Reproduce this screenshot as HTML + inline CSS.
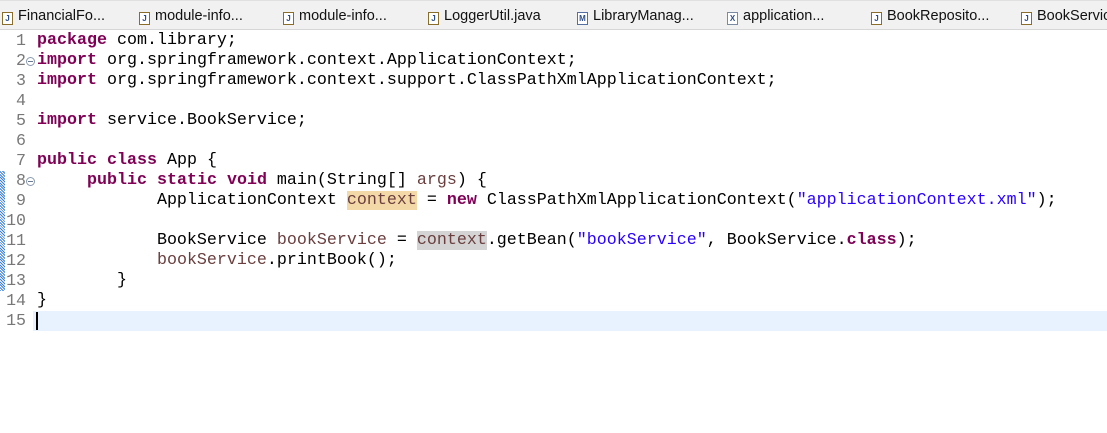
<!DOCTYPE html>
<html><head><style>
body{margin:0;width:1107px;height:433px;background:#fff;overflow:hidden;position:relative;font-family:"Liberation Mono",monospace}
.tabs{position:absolute;left:0;top:0;width:1107px;height:30px;background:#f1f1f1;border-top:1px solid #e0e0e0;border-bottom:1px solid #d6d6d6;box-sizing:border-box}
.tab{position:absolute;top:7px;font:14.5px "Liberation Sans",sans-serif;color:#111;white-space:nowrap}
.ic{display:inline-block;width:9px;height:11px;border:1px solid #8a6d2b;background:#fff;margin-right:5px;vertical-align:-1px;font:bold 8px "Liberation Sans";color:#2b4c8a;text-align:center;line-height:11px}
.ln{position:absolute;left:0;width:26px;text-align:right;font-size:16.6px;color:#787878;line-height:20px}
.code{position:absolute;left:37px;top:31px;margin:0;font-size:16.66px;line-height:20px;color:#000;white-space:pre}
.k{color:#7f0055;font-weight:bold}
.s{color:#2a00ff}
.v{color:#6a3e3e}
.hl{background:#f4d9a8}
.hg{background:#d4d4d4}
.cur{position:absolute;left:33px;top:311px;width:1074px;height:20px;background:#e8f2fe}
.caret{position:absolute;left:36px;top:312px;width:2px;height:18px;background:#000}
.fold{position:absolute;left:26px;width:7px;height:7px;border:1px solid #8a9ab0;border-radius:50%;font-size:0}
.fold:after{content:"";position:absolute;left:1px;top:3px;width:5px;height:1px;background:#6a7a90}
.strip{position:absolute;left:0;top:171px;width:5px;height:120px;background:repeating-linear-gradient(45deg,#3a7fd5 0 1px,#fff 1px 2px)}
</style></head><body>
<div class="tabs">
<div class="tab" style="left:2px"><span class="ic">J</span>FinancialFo...</div>
<div class="tab" style="left:139px"><span class="ic">J</span>module-info...</div>
<div class="tab" style="left:283px"><span class="ic">J</span>module-info...</div>
<div class="tab" style="left:428px"><span class="ic">J</span>LoggerUtil.java</div>
<div class="tab" style="left:577px"><span class="ic" style="border-color:#5570a0">M</span>LibraryManag...</div>
<div class="tab" style="left:727px"><span class="ic" style="border-color:#7a8aa0">X</span>application...</div>
<div class="tab" style="left:871px"><span class="ic">J</span>BookReposito...</div>
<div class="tab" style="left:1021px"><span class="ic">J</span>BookServic</div>
</div>
<div class="cur"></div>
<div class="caret"></div>
<div class="strip"></div>
<div class="ln" style="top:31px">1</div><div class="ln" style="top:51px">2</div><div class="ln" style="top:71px">3</div><div class="ln" style="top:91px">4</div><div class="ln" style="top:111px">5</div><div class="ln" style="top:131px">6</div><div class="ln" style="top:151px">7</div><div class="ln" style="top:171px">8</div><div class="ln" style="top:191px">9</div><div class="ln" style="top:211px">10</div><div class="ln" style="top:231px">11</div><div class="ln" style="top:251px">12</div><div class="ln" style="top:271px">13</div><div class="ln" style="top:291px">14</div><div class="ln" style="top:311px">15</div>
<div class="fold" style="top:57px"></div><div class="fold" style="top:177px"></div>
<pre class="code"><span class="k">package</span> com.library;
<span class="k">import</span> org.springframework.context.ApplicationContext;
<span class="k">import</span> org.springframework.context.support.ClassPathXmlApplicationContext;

<span class="k">import</span> service.BookService;

<span class="k">public</span> <span class="k">class</span> App {
     <span class="k">public</span> <span class="k">static</span> <span class="k">void</span> main(String[] <span class="v">args</span>) {
            ApplicationContext <span class="v hl">context</span> = <span class="k">new</span> ClassPathXmlApplicationContext(<span class="s">"applicationContext.xml"</span>);

            BookService <span class="v">bookService</span> = <span class="v hg">context</span>.getBean(<span class="s">"bookService"</span>, BookService.<span class="k">class</span>);
            <span class="v">bookService</span>.printBook();
        }
}
</pre>
</body></html>
